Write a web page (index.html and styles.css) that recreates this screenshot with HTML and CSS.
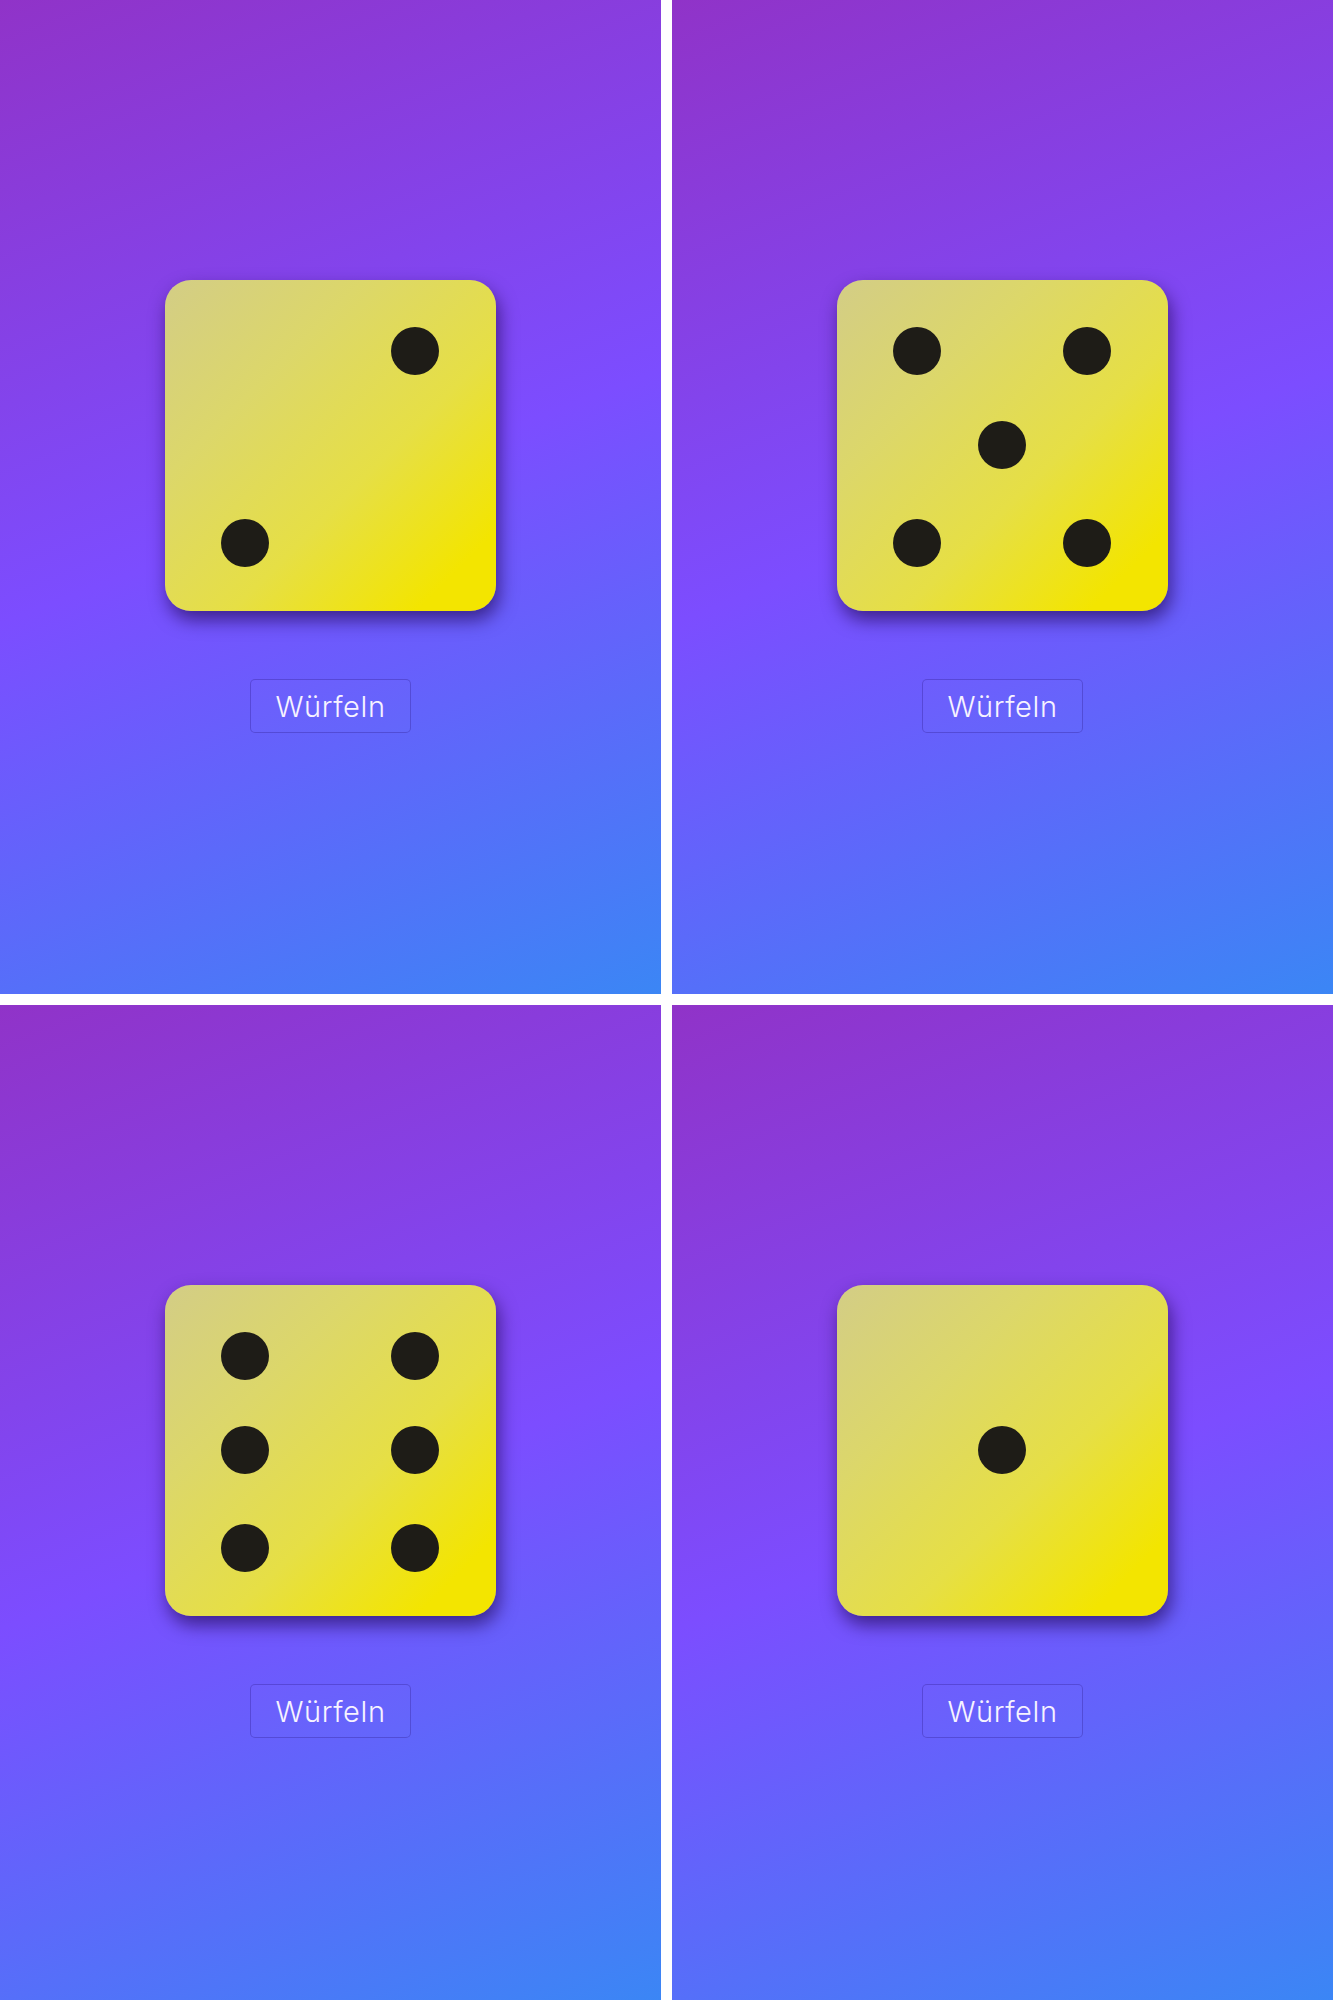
FILE: index.html
```html
<!DOCTYPE html>
<html lang="de">
<head>
<meta charset="utf-8">
<title>Würfel</title>
<link rel="stylesheet" href="styles.css">
</head>
<body>
<div class="grid">
  <section class="panel">
    <div class="die">
      <span class="pip c5 r1"></span>
      <span class="pip c1 r5"></span>
    </div>
    <button class="roll">Würfeln</button>
  </section>
  <section class="panel">
    <div class="die">
      <span class="pip c1 r1"></span>
      <span class="pip c5 r1"></span>
      <span class="pip c3 r3"></span>
      <span class="pip c1 r5"></span>
      <span class="pip c5 r5"></span>
    </div>
    <button class="roll">Würfeln</button>
  </section>
  <section class="panel">
    <div class="die">
      <span class="pip c1 r1"></span>
      <span class="pip c5 r1"></span>
      <span class="pip c1 r3"></span>
      <span class="pip c5 r3"></span>
      <span class="pip c1 r5"></span>
      <span class="pip c5 r5"></span>
    </div>
    <button class="roll">Würfeln</button>
  </section>
  <section class="panel">
    <div class="die">
      <span class="pip c3 r3"></span>
    </div>
    <button class="roll">Würfeln</button>
  </section>
</div>
</body>
</html>
```

FILE: styles.css
```css
html, body {
  margin: 0;
  padding: 0;
  background: #ffffff;
}

.grid {
  display: grid;
  grid-template-columns: 661px 661px;
  grid-template-rows: 994px 995px;
  column-gap: 11px;
  row-gap: 11px;
  width: 1333px;
  height: 2000px;
}

.panel {
  display: flex;
  flex-direction: column;
  align-items: center;
  padding-top: 280px;
  gap: 68px;
  box-sizing: border-box;
  background: linear-gradient(159deg, #9033c8 0%, #7c4dff 50%, #3b86f5 100%);
}

.die {
  width: 331px;
  height: 331px;
  box-sizing: border-box;
  border-radius: 26px;
  background: linear-gradient(135deg, #d3cd86 0%, #dcd76a 30%, #e6df45 60%, #f3e500 88%);
  box-shadow: 3px 9px 18px rgba(28, 4, 72, 0.62);
  display: grid;
  grid-template-columns: 48px 37px 48px 36.3px 48px;
  grid-template-rows: 48px 46.6px 48px 49.7px 48px;
  padding: 46.7px 0 0 56.4px;
  flex-shrink: 0;
}

.pip {
  width: 48px;
  height: 48px;
  border-radius: 50%;
  background: #1e1c17;
}

.c1 { grid-column: 1; }
.c3 { grid-column: 3; }
.c5 { grid-column: 5; }
.r1 { grid-row: 1; }
.r3 { grid-row: 3; }
.r5 { grid-row: 5; }

.roll {
  width: 161px;
  height: 54px;
  box-sizing: border-box;
  border: 1px solid rgba(40, 20, 130, 0.3);
  border-radius: 5px;
  background: rgba(255, 255, 255, 0.015);
  color: #f7f3ff;
  font-family: Inter, "Noto Sans", sans-serif;
  font-size: 29px;
  font-weight: 300;
  letter-spacing: 0.6px;
  padding: 0;
  cursor: pointer;
}
```
